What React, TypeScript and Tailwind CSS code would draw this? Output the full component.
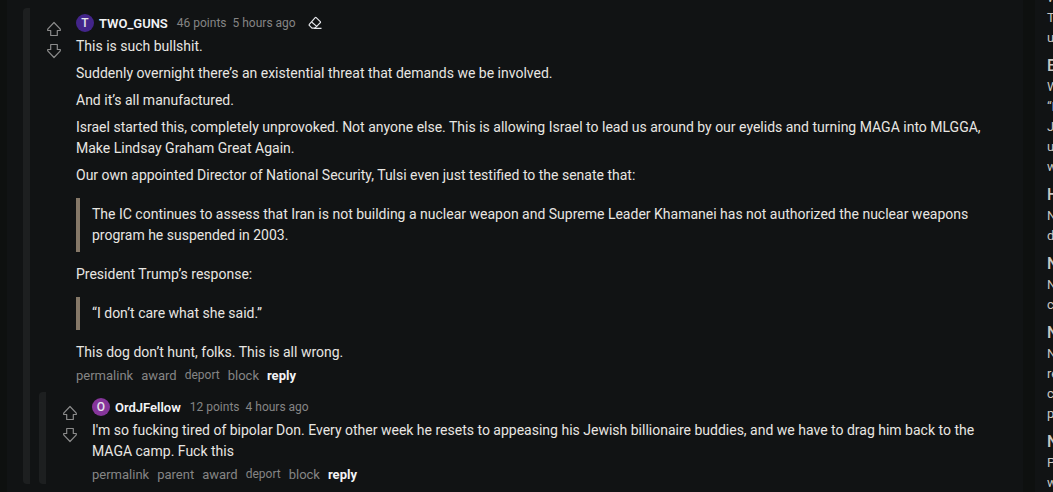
import type { ReactNode } from 'react';

interface CommentProps {
  author: string;
  initial: string;
  avatarClass: string;
  points: number;
  time: string;
  actions: string[];
  mark?: boolean;
  body: ReactNode;
  children?: ReactNode;
}

const rules = [
  { title: '', lines: ['W', 'T', 'u'] },
  { title: 'E', lines: ['W', '“I', 'J', 'u', 'w'] },
  { title: 'H', lines: ['N', 'd'] },
  { title: 'N', lines: ['N', 'c'] },
  { title: 'N', lines: ['N', 're', 'c', 'p'] },
  { title: 'N', lines: ['P', 'w'] },
];

function Arrow({ down = false }: { down?: boolean }) {
  return (
    <svg
      className={down ? 'rotate-180' : ''}
      width="16"
      height="16"
      viewBox="0 0 16 16"
      fill="none"
      stroke="currentColor"
      strokeWidth="1.2"
      strokeLinejoin="round"
    >
      <path d="M8 1.5 1.7 8.2v1.3h3v5h6.6v-5h3V8.2z" />
    </svg>
  );
}

function EraserIcon() {
  return (
    <svg width="14" height="14" viewBox="0 0 14 14" fill="none" stroke="currentColor" strokeWidth="1.2" strokeLinejoin="round">
      <path d="M8.2 1.6 12.3 5.7a.7.7 0 0 1 0 1L7 12.2H4L1.3 9.4a.7.7 0 0 1 0-1L7.2 1.6a.7.7 0 0 1 1 0z" />
      <path d="M3.6 6 9 10.6M6 12.4h7.5" />
    </svg>
  );
}

function Comment({ author, initial, avatarClass, points, time, actions, mark, body, children }: CommentProps) {
  return (
    <article className="flex">
      <div className="w-[7px] shrink-0 rounded-l-sm bg-[#1d1f20]" />
      <div className="min-w-0 flex-1 pl-[9px]">
        <div className="flex">
          <div className="flex w-[37px] shrink-0 flex-col items-center gap-[6px] pt-[13px] pr-[7px] text-[#8b8b8b]">
            <button type="button" aria-label="Upvote"><Arrow /></button>
            <button type="button" aria-label="Downvote"><Arrow down /></button>
          </div>
          <div className="min-w-0 flex-1 pt-[6px]">
            <header className="flex h-[18px] items-center text-[12px] text-[#858585]">
              <span className={`flex size-[18px] items-center justify-center rounded-full text-[12px] leading-4 font-medium text-gray-200 ${avatarClass}`}>
                {initial}
              </span>
              <a href="#" className="ml-[5px] text-[13px] font-semibold text-gray-100">{author}</a>
              <span className="ml-[9px]">{points} points</span>
              <span className="ml-[6px]">{time}</span>
              {mark && (
                <button type="button" aria-label="Clear" className="ml-3 text-gray-200"><EraserIcon /></button>
              )}
            </header>
            <div className="mt-1">{body}</div>
            <footer className="mt-[2px] flex h-5 items-center gap-2 text-[13px] text-[#858585]">
              {actions.map((action) => (
                <a key={action} href="#" className={action === 'deport' ? 'text-[12px]' : ''}>{action}</a>
              ))}
              <a href="#" className="font-bold text-gray-100">reply</a>
            </footer>
          </div>
        </div>
        {children}
      </div>
    </article>
  );
}

function Quote({ children }: { children: ReactNode }) {
  return <blockquote className="my-3 border-l-4 border-[#857868] py-[6px] pl-3">{children}</blockquote>;
}

export default function App() {
  return (
    <div className="flex h-screen overflow-hidden bg-[#0e100f] pl-[7px] font-[Roboto,'Liberation_Sans',sans-serif] text-[14px] leading-[21px] text-[#e8e6e2]">
      <main className="min-w-0 flex-1 bg-[#111314] pt-2 pr-9 pl-4">
        <Comment
          author="TWO_GUNS"
          initial="T"
          avatarClass="bg-[#43258a]"
          points={46}
          time="5 hours ago"
          mark
          actions={['permalink', 'award', 'deport', 'block']}
          body={
            <>
              <p>This is such bullshit.</p>
              <p className="mt-[6px]">Suddenly overnight there’s an existential threat that demands we be involved.</p>
              <p className="mt-[6px]">And it’s all manufactured.</p>
              <p className="mt-[6px]">
                Israel started this, completely unprovoked. Not anyone else. This is allowing Israel to lead us around by our
                eyelids and turning MAGA into MLGGA, Make Lindsay Graham Great Again.
              </p>
              <p className="mt-[6px]">
                Our own appointed Director of National Security, Tulsi even just testified to the senate that:
              </p>
              <Quote>
                The IC continues to assess that Iran is not building a nuclear weapon and Supreme Leader Khamanei has not
                authorized the nuclear weapons program he suspended in 2003.
              </Quote>
              <p>President Trump’s response:</p>
              <Quote>“I don’t care what she said.”</Quote>
              <p>This dog don’t hunt, folks. This is all wrong.</p>
            </>
          }
        >
          <div className="mt-[7px]">
            <Comment
              author="OrdJFellow"
              initial="O"
              avatarClass="bg-[#85359a]"
              points={12}
              time="4 hours ago"
              actions={['permalink', 'parent', 'award', 'deport', 'block']}
              body={
                <p>
                  I'm so fucking tired of bipolar Don. Every other week he resets to appeasing his Jewish billionaire buddies,
                  and we have to drag him back to the MAGA camp. Fuck this
                </p>
              }
            />
          </div>
        </Comment>
      </main>

      <aside className="ml-3 w-[18px] shrink-0 overflow-hidden bg-[#111314] pl-3 text-[13px] leading-5 whitespace-nowrap text-[#c9c7c3]">
        <div className="-mt-3">
          {rules.map((rule, i) => (
            <section key={i}>
              {rule.title && <h3 className="pt-[6px] text-[16px] leading-[23px] font-medium">{rule.title}</h3>}
              {rule.lines.map((line) => (
                <p key={line}>{line}</p>
              ))}
            </section>
          ))}
        </div>
      </aside>
    </div>
  );
}
